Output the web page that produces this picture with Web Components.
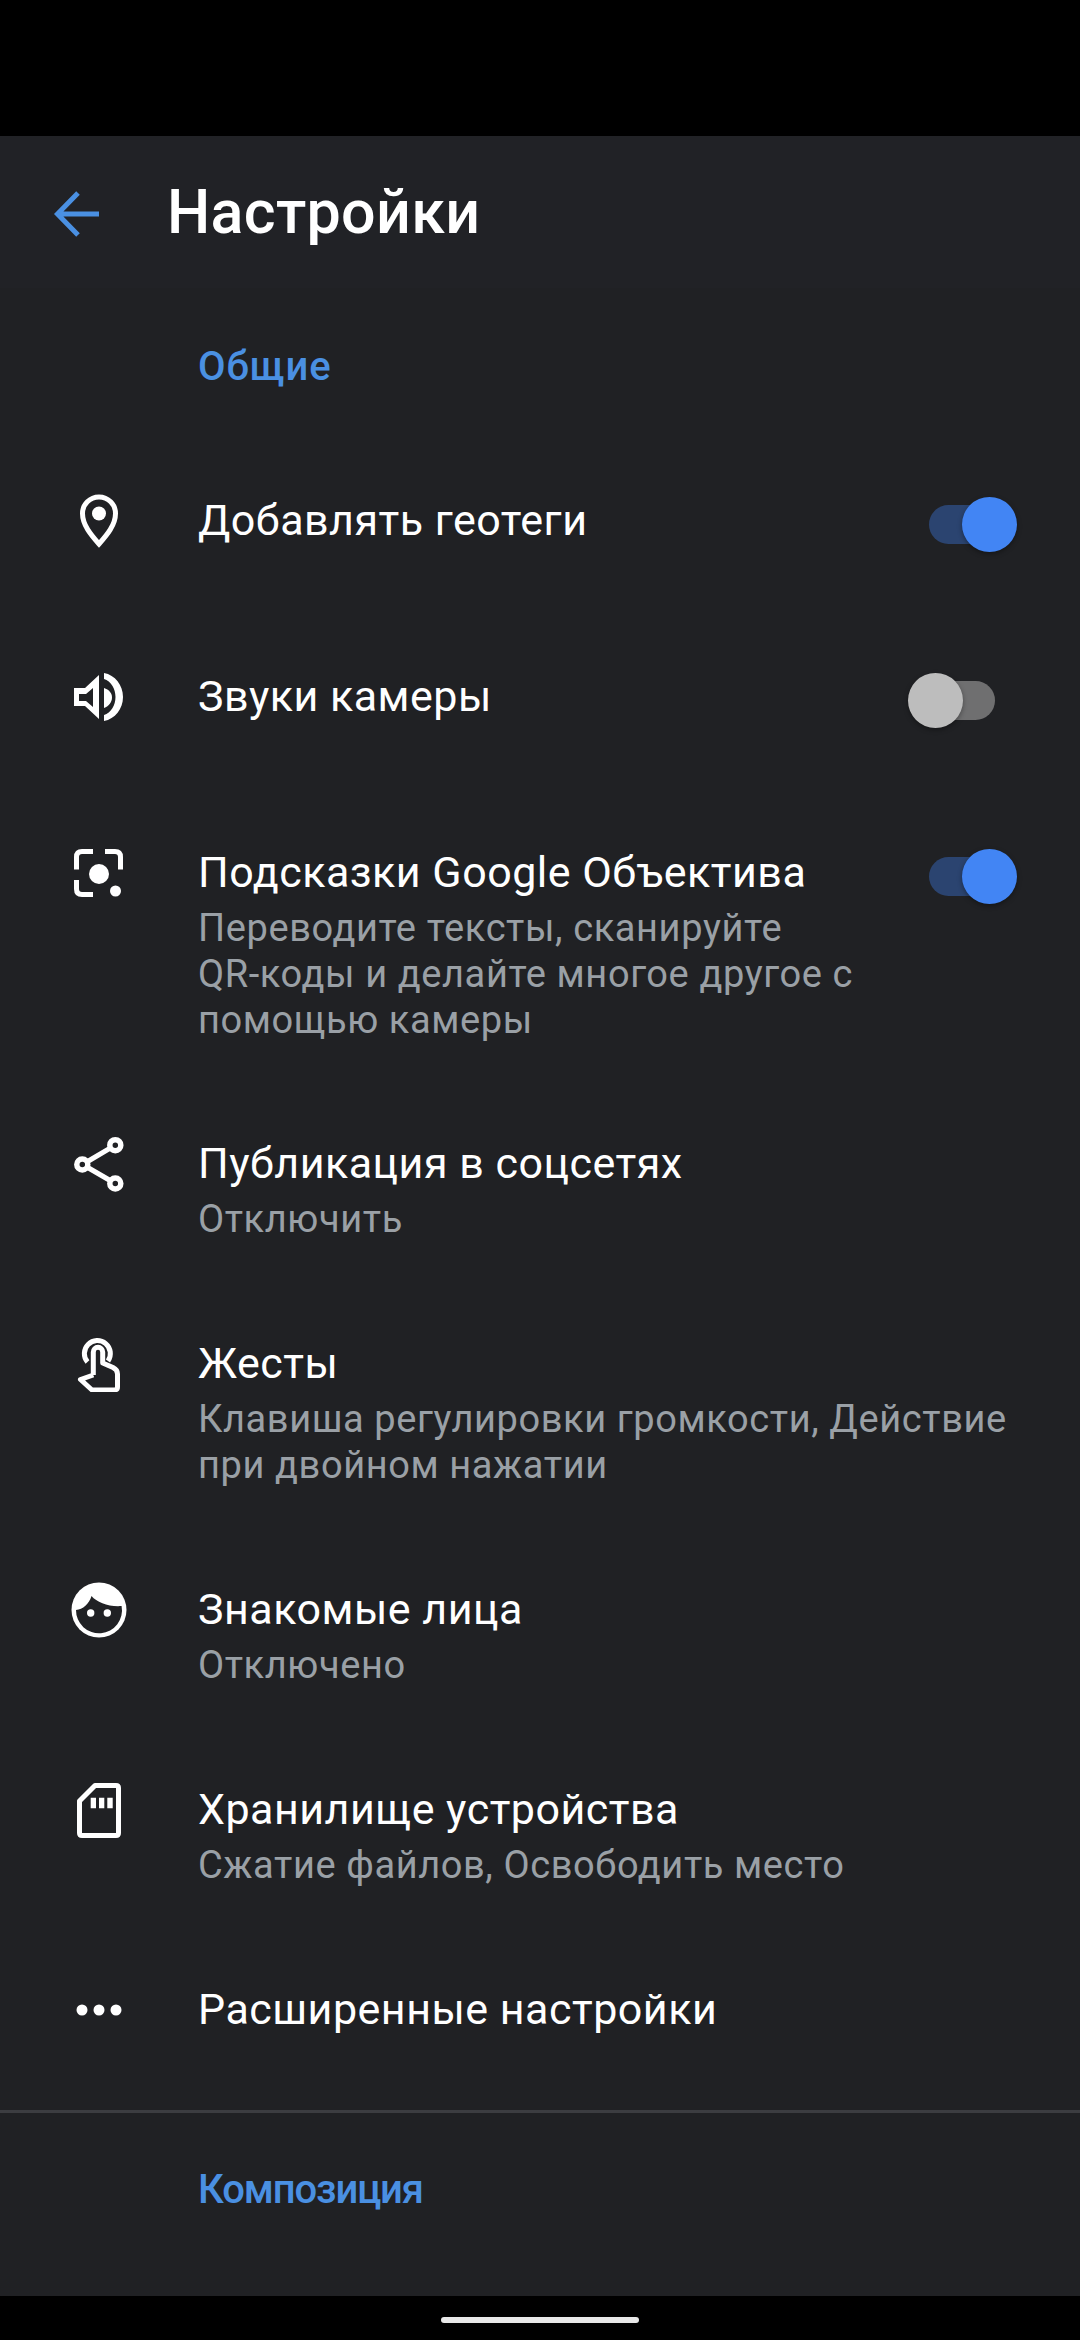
<!DOCTYPE html>
<html lang="ru">
<head>
<meta charset="utf-8">
<style>
  html, body { margin: 0; background: #000; }
  body { width: 1080px; height: 2340px; overflow: hidden; font-family: Roboto, "Noto Sans", sans-serif; display: flex; flex-direction: column; }
</style>
</head>
<body>
<settings-app>
  <app-bar slot="bar">Настройки</app-bar>
  <section-title style="--track: 1px">Общие</section-title>
  <settings-row height="176" top="52" title="Добавлять геотеги" toggle="on">
    <svg slot="icon" viewBox="0 0 56 56" fill="none"><path d="M28 51C20 42 11.500 32 11.500 20.500A16.500 16.500 0 0 1 44.500 20.500C44.500 32 36 42 28 51Z" stroke="#fff" stroke-width="5"/><circle cx="28" cy="20.500" r="7" fill="#fff"/></svg>
  </settings-row>
  <settings-row height="176" top="52" title="Звуки камеры" toggle="off">
    <svg slot="icon" viewBox="0 0 56 56" fill="#fff"><path d="M3 19H14L28 6V50L14 37H3ZM8 25V32H15L22 38V19L15 25Z" fill-rule="evenodd"/><path d="M33 4C44 6 52 16 52 28 52 40 44 50 33 52V46C40 44 44.500 36 44.500 28 44.500 20 40 12 33 10Z"/><path d="M33 19C38 20.500 41 24 41 28.500 41 33 38 37 33 39Z"/></svg>
  </settings-row>
  <settings-row height="307" top="52" title="Подсказки Google Объектива" toggle="on">
    <svg slot="icon" viewBox="0 0 56 56" fill="none" stroke="#fff" stroke-width="5"><path d="M22 6.500H11C7.500 6.500 5.500 8.500 5.500 12V24.500"/><path d="M34 6.500H44C47.500 6.500 49.500 8.500 49.500 12V24.500"/><path d="M5.500 35V44C5.500 47.500 7.500 49.500 11 49.500H22"/><circle cx="28" cy="29" r="10" fill="#fff" stroke="none"/><circle cx="44.500" cy="46" r="5.500" fill="#fff" stroke="none"/></svg>
    Переводите тексты, сканируйте<br>QR-коды и делайте многое другое с<br>помощью камеры
  </settings-row>
  <settings-row height="200" top="36" title="Публикация в соцсетях">
    <svg slot="icon" viewBox="0 0 56 56" fill="none" stroke="#fff" stroke-width="5.500"><path d="M11.500 28.500 44.300 9.200M11.500 28.500 44.300 47.500" stroke-width="5"/><circle cx="44.300" cy="9.200" r="5.500" fill="#202124"/><circle cx="44.300" cy="47.500" r="5.500" fill="#202124"/><circle cx="11.300" cy="28.500" r="5.500" fill="#202124"/></svg>
    Отключить
  </settings-row>
  <settings-row height="246" top="36" title="Жесты">
    <svg slot="icon" viewBox="0 0 56 56" fill="none" stroke="#fff" stroke-width="5" stroke-linejoin="round"><path d="M16.500 26A13 13 0 1 1 37 25"/><path d="M22.300 39V16A4.700 4.700 0 0 1 31.700 16V27L42 31.500C45 33 46.500 35 46.500 38V51C46.500 53 45 54 43 54H21L9.500 43.500 22.300 39"/></svg>
    Клавиша регулировки громкости, Действие<br>при двойном нажатии
  </settings-row>
  <settings-row height="200" top="36" title="Знакомые лица">
    <svg slot="icon" viewBox="0 0 56 56"><circle cx="28" cy="28" r="27.500" fill="#fff"/><path d="M5 28C12 27.500 18 22 20.500 14 26 20.500 38 25 50.600 24A23 23 0 1 1 5 28Z" fill="#202124"/><circle cx="19.700" cy="31" r="3.700" fill="#fff"/><circle cx="36.300" cy="31" r="3.700" fill="#fff"/></svg>
    Отключено
  </settings-row>
  <settings-row height="200" top="36" title="Хранилище устройства">
    <svg slot="icon" viewBox="0 0 56 56" fill="none"><path d="M24 3.500H45C46.500 3.500 47.500 4.500 47.500 6V51C47.500 52.500 46.500 53.500 45 53.500H11C9.500 53.500 8.500 52.500 8.500 51V19Z" stroke="#fff" stroke-width="5" stroke-linejoin="round"/><path d="M19.700 15.700H25V26.300H19.700ZM28 15.700H33.300V26.300H28ZM36.300 15.700H41.700V26.300H36.300Z" fill="#fff"/></svg>
    Сжатие файлов, Освободить место
  </settings-row>
  <settings-row height="164" top="36" title="Расширенные настройки">
    <svg slot="icon" viewBox="0 0 56 56" fill="#fff"><circle cx="11" cy="28" r="5.500"/><circle cx="28" cy="28" r="5.500"/><circle cx="45" cy="28" r="5.500"/></svg>
  </settings-row>
  <section-title divider style="--track: -1.100px">Композиция</section-title>
  <nav-pill slot="nav"></nav-pill>
</settings-app>
<script>
class SettingsApp extends HTMLElement {
  connectedCallback() {
    if (this.shadowRoot) return;
    this.attachShadow({ mode: 'open' }).innerHTML = `
      <style>
        :host { display: flex; flex-direction: column; width: 1080px; height: 2340px; background: #000; }
        .top { height: 136px; flex: none; }
        .screen { height: 2160px; flex: none; background: #202124; overflow: hidden; display: flex; flex-direction: column; }
      </style>
      <div class="top"></div>
      <div class="screen">
        <slot name="bar"></slot>
        <slot></slot>
      </div>
      <slot name="nav"></slot>`;
  }
}
class AppBar extends HTMLElement {
  connectedCallback() {
    if (this.shadowRoot) return;
    this.attachShadow({ mode: 'open' }).innerHTML = `
      <style>
        :host { display: flex; align-items: center; height: 152px; flex: none; color: #fff; font-size: 61px; font-weight: 500; letter-spacing: 0.3px; background: #212226; }
        svg { width: 48px; height: 48px; margin: 3px 66px 0 53px; flex: none; }
      </style>
      <svg viewBox="0 0 48 48" fill="none" stroke="#4a90e2" stroke-width="5"><path d="M46 24H6M25 3 4.500 24 25 45"/></svg>
      <span><slot></slot></span>`;
  }
}
class SectionTitle extends HTMLElement {
  connectedCallback() {
    if (this.shadowRoot) return;
    this.attachShadow({ mode: 'open' }).innerHTML = `
      <style>
        :host { display: block; color: #4a90e2; font-size: 40px; font-weight: 500; line-height: 44px; letter-spacing: var(--track, 0); padding: 57px 0 52px 198px; }
        :host([divider]) { border-top: 3px solid #3c3d41; padding-top: 55px; }
      </style>
      <slot></slot>`;
  }
}
class SettingsRow extends HTMLElement {
  connectedCallback() {
    if (this.shadowRoot) return;
    const on = this.getAttribute('toggle');
    this.attachShadow({ mode: 'open' }).innerHTML = `
      <style>
        :host { display: grid; grid-template-columns: 198px 1fr; box-sizing: border-box; flex: none; }
        .icon { display: flex; justify-content: center; width: 198px; }
        ::slotted(svg) { width: 56px; height: 56px; }
        .text { position: relative; min-width: 0; }
        .title { color: #fff; font-size: 43px; line-height: 52px; letter-spacing: 0.5px; padding-top: 1px; }
        .sub { color: #9aa0a6; font-size: 38px; line-height: 46px; letter-spacing: 0.6px; margin-top: 7px; }
      </style>
      <div class="icon"><slot name="icon"></slot></div>
      <div class="text">
        <div class="title"></div>
        <div class="sub"><slot></slot></div>
        ${on ? `<toggle-switch ${on === 'on' ? 'checked' : ''}></toggle-switch>` : ''}
      </div>`;
    this.style.height = this.getAttribute('height') + 'px';
    this.style.paddingTop = this.getAttribute('top') + 'px';
    this.shadowRoot.querySelector('.title').textContent = this.getAttribute('title');
    this.removeAttribute('title');
  }
}
class ToggleSwitch extends HTMLElement {
  connectedCallback() {
    if (this.shadowRoot) return;
    this.attachShadow({ mode: 'open' }).innerHTML = `
      <style>
        :host { position: absolute; right: 85px; top: 4px; width: 66px; height: 55px; display: block; }
        .track { position: absolute; left: 0; right: 0; top: 8px; height: 39px; border-radius: 20px; background: #6f6f70; }
        .thumb { position: absolute; left: -21px; top: 0; width: 55px; height: 55px; border-radius: 50%; background: #bdbdbd; box-shadow: 0 2px 5px rgba(0,0,0,.35); }
        :host([checked]) .track { background: #2b4470; }
        :host([checked]) .thumb { left: auto; right: -22px; background: #4285f4; }
      </style>
      <div class="track"></div><div class="thumb"></div>`;
  }
}
class NavPill extends HTMLElement {
  connectedCallback() {
    if (this.shadowRoot) return;
    this.attachShadow({ mode: 'open' }).innerHTML = `
      <style>
        :host { display: flex; justify-content: center; padding-top: 21px; height: 44px; box-sizing: border-box; }
        div { width: 198px; height: 6px; border-radius: 3px; background: #e8e8e8; }
      </style>
      <div></div>`;
  }
}
customElements.define('settings-app', SettingsApp);
customElements.define('app-bar', AppBar);
customElements.define('section-title', SectionTitle);
customElements.define('settings-row', SettingsRow);
customElements.define('toggle-switch', ToggleSwitch);
customElements.define('nav-pill', NavPill);
</script>
</body>
</html>
